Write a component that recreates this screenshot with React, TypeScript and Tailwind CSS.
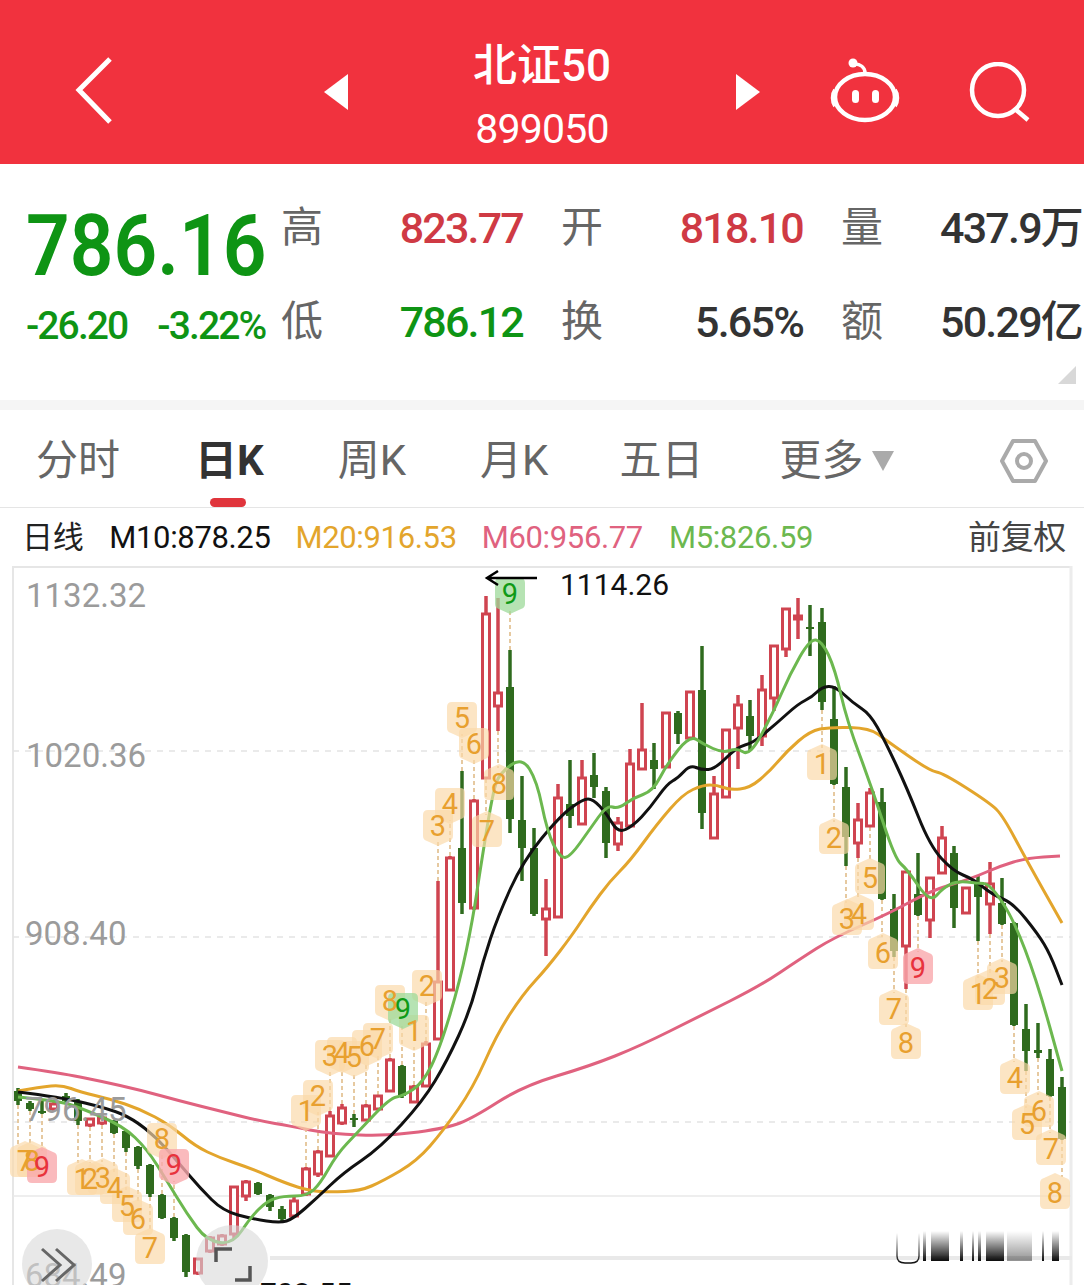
import type { ReactNode } from "react";

const RED = "#cf4450";
const GREEN = "#2f6b1e";
const cjk = { fontFamily: 'Roboto, "Noto Sans CJK SC", sans-serif' };

// x, high, bodyTop, bodyBottom, low, up?
type Candle = [number, number, number, number, number, 0 | 1];
const candles: Candle[] = [
  [18, 1087, 1090, 1100, 1104, 0], [30, 1100, 1102, 1108, 1110, 0], [42, 1100, 1110, 1112, 1113, 0],
  [54, 1101, 1103, 1108, 1110, 1], [66, 1092, 1095, 1100, 1103, 0], [78, 1098, 1100, 1120, 1124, 0],
  [90, 1117, 1118, 1124, 1126, 1], [102, 1116, 1117, 1122, 1124, 1], [114, 1119, 1120, 1132, 1133, 0],
  [126, 1129, 1130, 1147, 1151, 0], [138, 1145, 1146, 1165, 1168, 0], [150, 1163, 1164, 1193, 1196, 0],
  [162, 1193, 1194, 1217, 1218, 0], [174, 1216, 1217, 1237, 1240, 0], [186, 1233, 1234, 1271, 1276, 0],
  [198, 1257, 1258, 1272, 1274, 1], [210, 1235, 1237, 1250, 1252, 1], [222, 1233, 1235, 1243, 1245, 1],
  [234, 1185, 1186, 1233, 1238, 1], [246, 1179, 1181, 1195, 1200, 1], [258, 1181, 1182, 1193, 1194, 0],
  [270, 1193, 1194, 1206, 1210, 0], [282, 1205, 1208, 1218, 1220, 0], [294, 1195, 1200, 1215, 1216, 1],
  [306, 1166, 1168, 1193, 1195, 1], [318, 1149, 1151, 1173, 1176, 1], [330, 1110, 1115, 1155, 1156, 1],
  [342, 1103, 1107, 1122, 1124, 1], [354, 1113, 1117, 1119, 1126, 0], [366, 1103, 1105, 1119, 1120, 1],
  [378, 1094, 1095, 1108, 1109, 1], [390, 1057, 1059, 1090, 1091, 1], [402, 1064, 1065, 1095, 1097, 0],
  [414, 1084, 1086, 1101, 1102, 1], [426, 1040, 1043, 1085, 1086, 1], [438, 880, 981, 1038, 1039, 1],
  [450, 855, 857, 989, 990, 1], [462, 770, 847, 902, 913, 0], [474, 798, 800, 907, 909, 1],
  [486, 595, 613, 777, 778, 1], [498, 597, 692, 705, 730, 1], [510, 649, 686, 818, 832, 0],
  [522, 775, 819, 847, 880, 0], [534, 827, 847, 913, 915, 0], [546, 878, 908, 918, 955, 1],
  [558, 783, 797, 916, 917, 1], [570, 759, 803, 815, 827, 0], [582, 759, 777, 823, 824, 1],
  [594, 752, 774, 786, 797, 0], [606, 786, 790, 842, 857, 0], [618, 816, 822, 843, 850, 1],
  [630, 748, 763, 825, 826, 1], [642, 702, 749, 768, 769, 1], [654, 742, 759, 768, 788, 0],
  [666, 711, 712, 766, 767, 1], [678, 710, 712, 733, 743, 0], [690, 690, 691, 737, 738, 1],
  [702, 645, 689, 812, 828, 0], [714, 775, 793, 837, 838, 1], [726, 728, 729, 796, 797, 1],
  [738, 694, 704, 727, 768, 1], [750, 699, 715, 735, 750, 0], [762, 674, 689, 735, 745, 1],
  [774, 644, 645, 697, 710, 1], [786, 607, 608, 648, 656, 1], [798, 597, 615, 618, 638, 1],
  [810, 604, 626, 628, 655, 0], [822, 607, 621, 701, 709, 0], [834, 685, 718, 783, 784, 0],
  [846, 766, 786, 836, 865, 0], [858, 802, 819, 842, 857, 1], [870, 787, 792, 825, 826, 1],
  [882, 787, 801, 898, 899, 0], [894, 893, 908, 950, 956, 0], [906, 870, 871, 945, 988, 1],
  [918, 852, 893, 914, 915, 0], [930, 876, 877, 919, 937, 1], [942, 825, 837, 872, 873, 1],
  [954, 845, 852, 907, 927, 0], [966, 886, 887, 912, 913, 1], [978, 875, 882, 896, 940, 0],
  [990, 861, 883, 903, 933, 1], [1002, 877, 902, 923, 924, 0], [1014, 921, 922, 1024, 1025, 0],
  [1026, 1003, 1028, 1050, 1070, 0], [1038, 1022, 1049, 1052, 1057, 0], [1050, 1048, 1058, 1095, 1096, 0],
  [1062, 1076, 1086, 1138, 1139, 0],
];

const m60 = "18,1066 60,1072 100,1080 140,1089 180,1100 220,1110 260,1120 290,1125 330,1133 390,1135 447,1127 473,1117 523,1085 590,1065 640,1045 700,1015 760,985 800,958 833,937 890,912 930,890 973,877 1000,865 1027,857 1060,855";
const m20 = "18,1090 40,1086 62,1084 80,1091 110,1098 140,1108 170,1124 195,1145 220,1157 250,1167 285,1182 310,1190 330,1191 360,1190 383,1180 417,1160 443,1130 473,1087 497,1033 523,993 547,967 573,933 590,907 610,880 630,860 657,823 683,793 703,784 717,784 730,789 750,787 770,770 787,750 810,730 830,726 870,727 887,740 930,770 943,772 990,802 1003,815 1027,860 1062,922";
const m10 = "18,1091 60,1096 110,1108 133,1118 157,1137 177,1160 200,1187 223,1210 253,1218 280,1222 293,1218 317,1197 343,1172 380,1147 423,1100 447,1060 470,1010 483,960 498,915 523,860 560,815 583,798 593,798 607,813 618,832 633,825 650,807 667,783 678,777 690,764 702,769 715,768 737,746 753,742 777,722 798,703 812,696 822,686 835,685 853,702 870,713 885,740 907,787 930,845 953,870 973,878 993,894 1013,902 1038,933 1050,953 1062,984";
const m5 = "18,1096 60,1100 83,1108 123,1125 147,1148 167,1180 187,1213 207,1240 233,1243 250,1217 267,1200 283,1195 307,1195 320,1183 337,1153 357,1132 390,1097 403,1095 423,1082 440,1047 460,980 473,917 480,870 493,790 500,772 522,756 537,780 547,830 560,857 570,856 590,828 607,804 618,808 633,797 653,790 667,763 690,734 703,743 723,752 737,747 750,755 773,712 790,673 810,638 822,640 835,668 847,720 872,787 895,858 907,868 930,902 943,887 957,880 977,882 990,883 1013,917 1037,980 1062,1070";

// rounds the corners of a polyline through the midpoints of its segments
function smooth(points: string) {
  const p = points.split(" ").map((s) => s.split(",").map(Number));
  let d = `M${p[0][0]} ${p[0][1]}`;
  for (let i = 1; i < p.length - 1; i++) {
    const mx = (p[i][0] + p[i + 1][0]) / 2;
    const my = (p[i][1] + p[i + 1][1]) / 2;
    d += `Q${p[i][0]} ${p[i][1]} ${mx} ${my}`;
  }
  const last = p[p.length - 1];
  return `${d}L${last[0]} ${last[1]}`;
}

// x, y, digit, tone, candle x when the badge sits off its candle
type Badge = [number, number, string, "o" | "r" | "g", number?];
const badges: Badge[] = [
  [25, 1160, "7", "o", 18], [32, 1160, "8", "o", 30], [42, 1166, "9", "r"],
  [82, 1178, "1", "o", 78], [90, 1178, "2", "o"], [103, 1177, "3", "o"], [115, 1187, "4", "o"],
  [127, 1205, "5", "o"], [138, 1218, "6", "o"], [150, 1247, "7", "o"], [162, 1138, "8", "o"],
  [174, 1164, "9", "r"], [306, 1110, "1", "o"], [318, 1095, "2", "o"], [330, 1055, "3", "o"],
  [342, 1052, "4", "o"], [354, 1056, "5", "o"], [367, 1045, "6", "o"], [378, 1038, "7", "o"],
  [390, 1000, "8", "o"], [414, 1030, "1", "o"], [427, 985, "2", "o"], [438, 825, "3", "o"],
  [450, 803, "4", "o"], [462, 717, "5", "o"], [474, 743, "6", "o"], [487, 830, "7", "o"],
  [499, 783, "8", "o"], [822, 763, "1", "o"], [834, 837, "2", "o"], [847, 918, "3", "o"],
  [859, 913, "4", "o"], [870, 877, "5", "o"], [883, 952, "6", "o"], [894, 1008, "7", "o"],
  [906, 1042, "8", "o"], [918, 967, "9", "r"], [978, 993, "1", "o"], [990, 988, "2", "o"],
  [1002, 977, "3", "o"], [1015, 1077, "4", "o", 1014], [1027, 1123, "5", "o"], [1039, 1110, "6", "o"],
  [1051, 1148, "7", "o"], [1055, 1192, "8", "o", 1062], [403, 1008, "9", "g"], [510, 593, "9", "g"],
];

const tone = {
  o: { bg: "#fbd9a8", fg: "#e8a02f", op: 0.68 },
  r: { bg: "#f9a9ad", fg: "#e8323c", op: 0.8 },
  g: { bg: "#9ed99a", fg: "#0f9a16", op: 0.75 },
};

function nearest(x: number) {
  return candles.reduce((a, b) => (Math.abs(b[0] - x) < Math.abs(a[0] - x) ? b : a));
}

function badgePath(x: number, y: number, down: boolean) {
  // rounded tag with a small point towards its candle
  const l = x - 15, r = x + 15, t = y - 16, b = y + 16;
  if (down) {
    return `M${l + 5} ${t}H${r - 5}Q${r} ${t} ${r} ${t + 5}V${b - 6}Q${r} ${b - 2} ${r - 4} ${b - 1}L${x} ${b + 4}L${l + 4} ${b - 1}Q${l} ${b - 2} ${l} ${b - 6}V${t + 5}Q${l} ${t} ${l + 5} ${t}Z`;
  }
  return `M${x} ${t - 4}L${r - 4} ${t + 1}Q${r} ${t + 2} ${r} ${t + 6}V${b - 5}Q${r} ${b} ${r - 5} ${b}H${l + 5}Q${l} ${b} ${l} ${b - 5}V${t + 6}Q${l} ${t + 2} ${l + 4} ${t + 1}Z`;
}

function Chart() {
  const labels: [number, number, string][] = [
    [26, 606, "1132.32"], [26, 766, "1020.36"], [25, 944, "908.40"], [25, 1120, "796.45"], [25, 1286, "684.49"],
  ];
  return (
    <svg viewBox="0 565 1084 720" className="block w-full h-full" style={cjk}>
      <defs>
        <linearGradient id="fade" x1="0" y1="0" x2="0" y2="1">
          <stop offset="0" stopColor="#000" stopOpacity="0" />
          <stop offset="1" stopColor="#000" stopOpacity="0.95" />
        </linearGradient>
      </defs>
      <path d="M1071 566H13V1285" fill="none" stroke="#e6e6e6" strokeWidth="2" />
      <path d="M1071 565V1285" fill="none" stroke="#ececec" strokeWidth="3" />
      {[750, 936, 1121].map((y) => (
        <line key={y} x1="13" x2="1071" y1={y} y2={y} stroke="#e4e4e4" strokeWidth="1.5" strokeDasharray="6 6" />
      ))}
      <line x1="13" x2="1071" y1="1195" y2="1195" stroke="#e9e9e9" strokeWidth="1.5" />
      <rect x="270" y="1255" width="802" height="4" fill="#e9e9e9" />

      {/* range slider, blurred in the source */}
      {[[923, 3], [931, 18], [960, 3], [972, 2], [978, 3], [986, 18], [1042, 2], [1052, 7]].map(([x, w]) => (
        <rect key={x} x={x} y="1230" width={w} height="30" fill="url(#fade)" />
      ))}
      <rect x="1007" y="1230" width="25" height="30" fill="url(#fade)" opacity="0.45" />
      <path d="M897 1232V1255Q897 1262 905 1262H911Q919 1262 919 1255V1232" fill="none" stroke="url(#fade)" strokeWidth="1.5" />

      {/* dotted leaders */}
      {badges.map(([x, y, , , cx], i) => {
        const c = nearest(cx ?? x);
        const below = y > c[4];
        return (
          <line key={i} x1={c[0]} x2={c[0]} y1={below ? c[4] : c[1]} y2={below ? y - 16 : y + 16} stroke="#e6c9a0" strokeWidth="2" strokeDasharray="4 3" />
        );
      })}

      {candles.map(([x, hi, top, bot, lo, up]) => {
        const col = up ? RED : GREEN;
        return (
          <g key={x}>
            <line x1={x} x2={x} y1={hi} y2={lo} stroke={col} strokeWidth="3.5" />
            {up ? (
              <rect x={x - 3.5} y={top} width="7" height={bot - top} fill="#fff" stroke={col} strokeWidth="3" />
            ) : (
              <rect x={x - 4} y={top} width="8" height={bot - top} fill={col} />
            )}
          </g>
        );
      })}

      <path d={smooth(m60)} fill="none" stroke="#e0627f" strokeWidth="3" />
      <path d={smooth(m20)} fill="none" stroke="#e3a52c" strokeWidth="3" />
      <path d={smooth(m10)} fill="none" stroke="#111" strokeWidth="3" />
      <path d={smooth(m5)} fill="none" stroke="#6cb84f" strokeWidth="3" />

      {badges.map(([x, y, , t, cx], i) => {
        const c = nearest(cx ?? x);
        return <path key={i} d={badgePath(x, y, y < c[1] + 20 && y <= c[2])} fill={tone[t].bg} opacity={tone[t].op} />;
      })}
      {badges.map(([x, y, d, t], i) => (
        <text key={i} x={x} y={y + 10} textAnchor="middle" fontSize="29" fill={tone[t].fg}>{d}</text>
      ))}

      {labels.map(([x, y, t]) => (
        <text key={t} x={x} y={y} fontSize="33" fill="#9b9b9b">{t}</text>
      ))}

      {/* highest price marker */}
      <path d="M537 577H487M498 570L487 577L498 584" fill="none" stroke="#000" strokeWidth="2.5" />
      <text x="560" y="594" fontSize="30" fill="#111">1114.26</text>
      <text x="260" y="1303" fontSize="30" fill="#111">703.55</text>

      {/* floating round buttons */}
      <circle cx="57" cy="1263" r="35" fill="#d9d9d9" opacity="0.6" />
      <path d="M42 1248L60 1264L42 1280M56 1248L74 1264L56 1280" fill="none" stroke="#666" strokeWidth="3" />
      <circle cx="232" cy="1260" r="36" fill="#d9d9d9" opacity="0.6" />
      <path d="M216 1261V1248H232M250 1265V1279H235" fill="none" stroke="#555" strokeWidth="3.5" />
    </svg>
  );
}

function Stat({ label, value, color }: { label: string; value: string; color: string }) {
  return (
    <div className="flex items-center justify-between h-[46px]">
      <span className="text-[42px] leading-none text-[#666] -ml-px" style={cjk}>{label}</span>
      <span className={`text-[43px] leading-none font-medium whitespace-nowrap tracking-[-1.8px] ${color}`} style={cjk}>{value}</span>
    </div>
  );
}

function Tab({ children, className }: { children: ReactNode; className: string }) {
  return <span className={`text-[42px] leading-none whitespace-nowrap ${className}`} style={cjk}>{children}</span>;
}

export default function App() {
  return (
    <div className="w-[1084px] h-[1285px] overflow-hidden bg-white">
      <header className="h-[164px] pt-[18px] bg-[#f1323e] flex items-center text-white">
        <svg width="40" height="72" viewBox="0 0 40 72" className="ml-[75px]">
          <path d="M35 4L4 35L35 67" fill="none" stroke="#fff" strokeWidth="5" />
        </svg>
        <svg width="24" height="36" viewBox="0 0 24 36" className="ml-[209px] mt-[2px]">
          <path d="M24 0V36L0 18Z" fill="#fff" />
        </svg>
        <div className="w-[388px] mt-[12px] flex flex-col items-center" style={cjk}>
          <div className="text-[44px] leading-none font-medium">北证50</div>
          <div className="text-[41px] leading-none mt-[21px] tracking-[-0.8px]">899050</div>
        </div>
        <svg width="24" height="36" viewBox="0 0 24 36" className="mt-[2px]">
          <path d="M0 0V36L24 18Z" fill="#fff" />
        </svg>
        <svg width="72" height="66" viewBox="0 0 72 66" className="ml-[69px]">
          <ellipse cx="36" cy="39" rx="30" ry="23" fill="none" stroke="#fff" strokeWidth="4.5" />
          <path d="M6 32C3 36 3 44 6 48M66 32C69 36 69 44 66 48" fill="none" stroke="#fff" strokeWidth="4" />
          <path d="M36 15C36 9 31 6 26 6" fill="none" stroke="#fff" strokeWidth="3.5" />
          <circle cx="24" cy="5" r="4.5" fill="#fff" />
          <rect x="23" y="32" width="7" height="13" rx="3.5" fill="#fff" />
          <rect x="43" y="32" width="7" height="13" rx="3.5" fill="#fff" />
        </svg>
        <svg width="62" height="62" viewBox="0 0 62 62" className="ml-[68px] mt-[4px]">
          <circle cx="29" cy="28" r="26" fill="none" stroke="#fff" strokeWidth="4.5" />
          <path d="M46 47L59 58" fill="none" stroke="#fff" strokeWidth="4.5" />
        </svg>
      </header>

      <section className="relative h-[236px] flex">
        <div className="w-[256px] ml-[26px] mt-[36px] shrink-0">
          <div className="text-[86px] leading-[92px] font-semibold text-[#0e9414] origin-left scale-x-[.89] whitespace-nowrap" style={cjk}>786.16</div>
          <div className="mt-[15px] flex text-[#0e9414] text-[39px] leading-none font-medium whitespace-nowrap tracking-[-1.9px]" style={cjk}>
            <span>-26.20</span>
            <span className="ml-[30px]">-3.22%</span>
          </div>
        </div>
        <div className="grid grid-cols-[241px_241px_240px] gap-x-[39px] gap-y-[48px] mt-[41px] h-fit">
          <Stat label="高" value="823.77" color="text-[#cf3a44]" />
          <Stat label="开" value="818.10" color="text-[#cf3a44]" />
          <Stat label="量" value="437.9万" color="text-[#333]" />
          <Stat label="低" value="786.12" color="text-[#0e9414]" />
          <Stat label="换" value="5.65%" color="text-[#333]" />
          <Stat label="额" value="50.29亿" color="text-[#333]" />
        </div>
        <svg width="18" height="18" viewBox="0 0 18 18" className="absolute right-[8px] bottom-[16px]">
          <path d="M18 0V18H0Z" fill="#d8d8d8" />
        </svg>
      </section>

      <div className="h-[10px] bg-[#f5f5f5]" />

      <nav className="relative h-[98px] flex items-center border-b border-[#e5e5e5] pt-[4px] text-[#666]">
        <Tab className="ml-[36px]">分时</Tab>
        <Tab className="ml-[75px] font-bold text-[#333]">日K</Tab>
        <Tab className="ml-[74px]">周K</Tab>
        <Tab className="ml-[74px]">月K</Tab>
        <Tab className="ml-[71px]">五日</Tab>
        <Tab className="ml-[76px]">更多</Tab>
        <svg width="22" height="20" viewBox="0 0 22 20" className="ml-[9px]">
          <path d="M0 0H22L11 20Z" fill="#aaa" />
        </svg>
        <svg width="50" height="46" viewBox="0 0 50 46" className="ml-[105px]">
          <path d="M14 3H36L47 23L36 43H14L3 23Z" fill="none" stroke="#aaa" strokeWidth="4" strokeLinejoin="round" />
          <circle cx="25" cy="23" r="7" fill="none" stroke="#aaa" strokeWidth="4" />
        </svg>
        <div className="absolute left-[210px] bottom-0 w-[36px] h-[9px] rounded-full bg-[#e0353c]" />
      </nav>

      <div className="h-[58px] pt-[2px] flex items-center whitespace-nowrap text-[31px] tracking-[-0.35px]" style={cjk}>
        <span className="ml-[22px] text-[31px] text-[#222]">日线</span>
        <span className="ml-[26px] text-[#111]">M10:878.25</span>
        <span className="ml-[25px] text-[#e3a52c]">M20:916.53</span>
        <span className="ml-[25px] text-[#e0627f]">M60:956.77</span>
        <span className="ml-[26px] text-[#6cb84f]">M5:826.59</span>
        <span className="ml-auto mr-[18px] text-[33px] text-[#444]">前复权</span>
      </div>

      <div className="h-[720px]">
        <Chart />
      </div>
    </div>
  );
}
